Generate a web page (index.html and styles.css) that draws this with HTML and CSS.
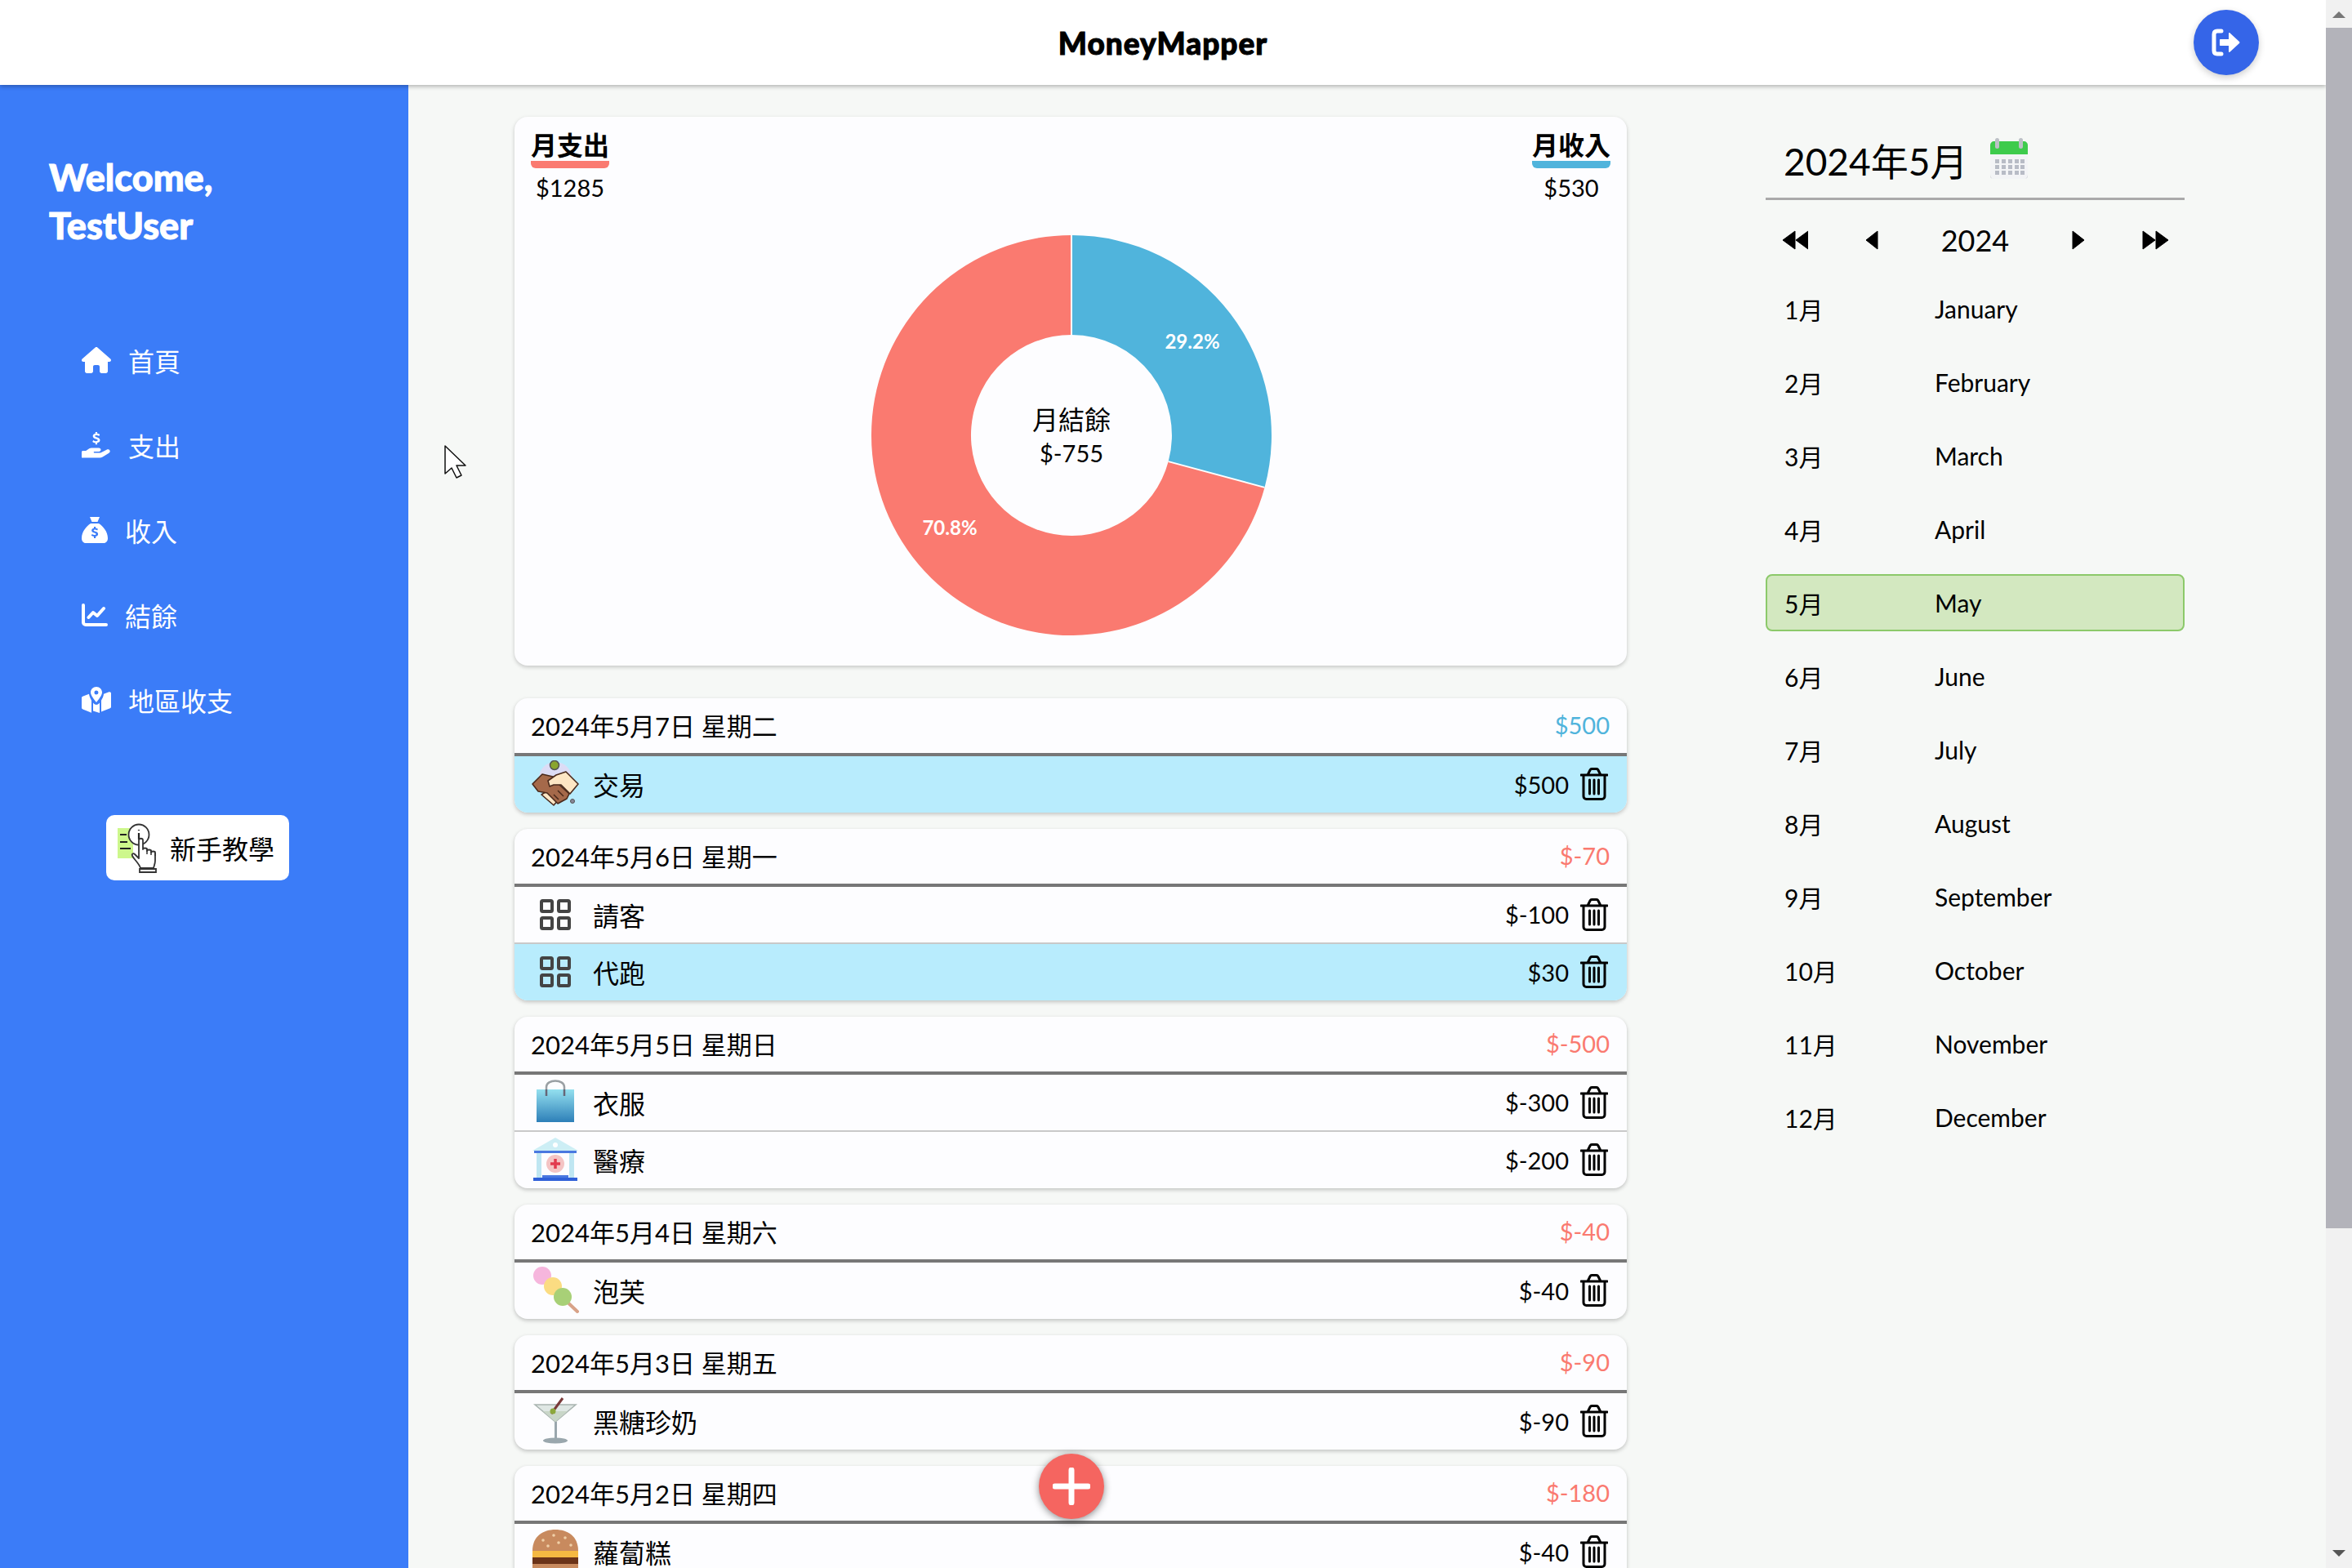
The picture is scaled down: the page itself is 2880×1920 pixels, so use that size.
FILE: index.html
```html
<!DOCTYPE html>
<html lang="zh-Hant">
<head>
<meta charset="utf-8">
<title>MoneyMapper</title>
<link rel="stylesheet" href="styles.css">
</head>
<body>
<svg class="defs" width="0" height="0" aria-hidden="true">
  <symbol id="trash" viewBox="0 0 34 40">
    <path d="M1 9h32M9 9l3-6c.5-1 1-1.500 2-1.500h6c1 0 1.500.5 2 1.500l3 6M4 9v26c0 2 1.500 3.500 3.500 3.500h19c2 0 3.500-1.500 3.500-3.500V9M11.500 15v17M17 15v17M22.500 15v17" fill="none" stroke="#000" stroke-width="3" stroke-linecap="round" stroke-linejoin="round"/>
  </symbol>
  <symbol id="grid" viewBox="0 0 38 38">
    <g fill="none" stroke="#444" stroke-width="4">
      <rect x="2" y="2" width="13" height="13" rx="1.500"/><rect x="23" y="2" width="13" height="13" rx="1.500"/>
      <rect x="2" y="23" width="13" height="13" rx="1.500"/><rect x="23" y="23" width="13" height="13" rx="1.500"/>
    </g>
  </symbol>
</svg>
<div class="screen">
  <div class="page">
    <header class="topbar">
      <h1 class="brand">MoneyMapper</h1>
      <button class="logout" aria-label="logout">
        <svg width="36" height="34" viewBox="0 0 36 34"><path d="M12 3H7C4.500 3 3 4.500 3 7v20c0 2.500 1.500 4 4 4h5" fill="none" stroke="#fff" stroke-width="5" stroke-linecap="round"/><path d="M11 13h10V6c0-.8 1-1.200 1.600-.6L34 16c.6.600.6 1.400 0 2L22.600 28.600c-.6.600-1.600.2-1.600-.6v-7H11c-.6 0-1-.4-1-1v-6c0-.6.400-1 1-1z" fill="#fff"/></svg>
      </button>
    </header>
    <div class="content">
      <aside class="sidebar">
        <h2 class="welcome">Welcome,<br>TestUser</h2>
        <nav class="nav">
          <a class="nav-link"><svg class="nav-icon" width="36" height="32" viewBox="0 0 576 512"><path fill="#fff" d="M575.800 255.500c0 18-15 32.100-32 32.100h-32l.7 160.200c0 2.700-.2 5.400-.5 8.100V472c0 22.100-17.900 40-40 40H456c-1.100 0-2.200 0-3.300-.1c-1.400.1-2.800.1-4.200.1H416 392c-22.100 0-40-17.900-40-40V448 384c0-17.700-14.300-32-32-32H256c-17.700 0-32 14.300-32 32v64 24c0 22.100-17.900 40-40 40H160 128.100c-1.500 0-3-.1-4.500-.2c-1.200.1-2.400.2-3.600.2H104c-22.100 0-40-17.900-40-40V360c0-.9 0-1.900.1-2.800V287.600H32c-18 0-32-14-32-32.100c0-9 3-17 10-24L266.400 8c7-7 15-8 22-8s15 2 21 7L564.800 231.500c8 7 12 15 11 24z"/></svg><span>首頁</span></a>
          <a class="nav-link"><svg class="nav-icon" width="36" height="32" viewBox="0 0 36 32"><path fill="#fff" d="M0 24.500c0-.8.700-1.500 1.500-1.500h3.700l3.300-2.300c1.500-1 3-1.200 4.500-1.200h8c1.500 0 2.500 1 2.500 2.200s-1 2.300-2.500 2.300h-5.500c-.5 0-.8.300-.8.700s.3.800.8.800h7.500l7.500-3.800c1.500-.8 3.200-.4 3.900.7.700 1 .2 2.500-1 3.300l-7.700 4.800c-1 .6-2.300 1-3.500 1H1.500C.7 32 0 31.300 0 30.500z"/><path fill="#fff" d="M17 0h2.500v2c1.500.2 2.800.8 3.500 1.300l-1 2.300c-1-.6-2.300-1.100-3.500-1.100-1.300 0-2 .4-2 1.100 0 .8 1 1.100 2.600 1.600 2.300.7 4.200 1.500 4.200 3.900 0 2-1.500 3.300-3.800 3.600V17H17v-2.200c-1.500-.2-3-.8-4-1.600l1.100-2.200c1.100.9 2.600 1.400 3.900 1.400 1.400 0 2.200-.5 2.200-1.200 0-.9-1-1.200-2.700-1.800-2.100-.7-4-1.500-4-3.800 0-1.900 1.300-3.200 3.500-3.500z" transform="translate(1.500 0) scale(.9)"/></svg><span>支出</span></a>
          <a class="nav-link"><svg class="nav-icon" width="32" height="32" viewBox="0 0 32 32"><path fill="#fff" d="M10 0h12l-2.500 6h-7zM11 8h10c5 3 11 10 11 18 0 3.500-2 6-5 6H5c-3 0-5-2.500-5-6C0 18 6 11 11 8z"/><path fill="#3b7cf8" d="M15 12h2.200v1.700c1.100.1 2 .5 2.700 1l-.8 1.800c-.8-.5-1.800-.9-2.800-.9-1 0-1.600.3-1.600.9 0 .7.800.9 2.100 1.300 1.800.6 3.300 1.200 3.300 3.100 0 1.600-1.100 2.600-2.900 2.900V26H15v-2c-1.200-.2-2.400-.7-3.200-1.300l.9-1.800c.9.700 2.100 1.100 3.100 1.100 1.100 0 1.700-.4 1.700-1 0-.7-.8-1-2.100-1.400-1.700-.6-3.200-1.200-3.200-3 0-1.500 1-2.500 2.800-2.800z"/></svg><span>收入</span></a>
          <a class="nav-link"><svg class="nav-icon" width="32" height="28" viewBox="0 0 32 28"><path d="M2 2v21c0 1.700 1.300 3 3 3h25M8.500 17l5.500-6 5 4 8-9" fill="none" stroke="#fff" stroke-width="4" stroke-linecap="round" stroke-linejoin="round"/></svg><span>結餘</span></a>
          <a class="nav-link"><svg class="nav-icon" width="36" height="32" viewBox="0 0 36 32"><path fill="#fff" fill-rule="evenodd" d="M18 0c4 0 7 3 7 6.800C25 10.500 20.500 16 18 19c-2.500-3-7-8.500-7-12.200C11 3 14 0 18 0zm0 4.500a2.500 2.500 0 1 0 0 5 2.500 2.500 0 0 0 0-5z"/><path fill="#fff" d="M0 13.500c0-.8.500-1.500 1.200-1.800L9 8.800c.2 2.500 2 6 3 8v15L1.400 27.500C.6 27.200 0 26.500 0 25.600zM14 19.500c1.500 1.800 3 2.500 4 2.500s2.500-.7 4-2.500V32l-8-2.500zM24 16.800c1-2 2.800-5 3-8l6.500-2.500C34.800 5.800 36 6.700 36 8v16.500c0 .8-.5 1.500-1.200 1.800L24 30.500z"/></svg><span>地區收支</span></a>
        </nav>
        <button class="tutorial">
          <svg class="tutorial-icon" width="54" height="62" viewBox="0 0 54 62">
            <rect x="0" y="7" width="19" height="37" fill="#cdf78c"/>
            <path d="M3 15h8M3 24h9M3 32h13" stroke="#222" stroke-width="2" fill="none"/>
            <circle cx="26" cy="15" r="12.500" fill="#fff" stroke="#333" stroke-width="1.800"/>
            <path d="M26 9v1M26 13v8" stroke="#222" stroke-width="2.200"/>
            <path d="M28 56c-1-5-8-11-10-15-1-2 1-4 3-2l5 5V22c0-3 5-3 5 0v11c0-2 5-2 5 0v2c0-2 5-2 5 0v2c0-2 5-2 5 0v10c0 3-1 5-2 9z" fill="#fff" stroke="#333" stroke-width="1.800" stroke-linejoin="round"/>
            <path d="M36 33v6M41 35v5M46 37v4" stroke="#333" stroke-width="1.500"/>
            <path d="M27 57h20v4H27z" fill="#fff" stroke="#333" stroke-width="1.800"/>
          </svg>
          <span>新手教學</span>
        </button>
      </aside>
      <main class="main">
        <section class="list-column">
          <div class="summary">
            <div class="summary-top">
              <div class="legend"><span class="legend-name legend-out">月支出</span><span class="legend-value">$1285</span></div>
              <div class="legend"><span class="legend-name legend-in">月收入</span><span class="legend-value">$530</span></div>
            </div>
            <div class="donut">
              <svg width="492" height="492" viewBox="-246 -246 492 492">
                <path fill="#fa7a70" d="M0-245A245 245 0 1 0 236.500 63.900L118.700 32.100A123 123 0 1 1 0-123z"/>
                <path fill="#50b4dc" d="M0-245A245 245 0 0 1 236.500 63.900L118.700 32.100A123 123 0 0 0 0-123z"/>
                <path d="M0-245V-123M236.500 63.900L118.700 32.100" stroke="#fff" stroke-width="2"/>
                <text class="donut-pct" x="148" y="-106">29.2%</text>
                <text class="donut-pct" x="-149" y="122">70.8%</text>
              </svg>
              <div class="donut-center"><span>月結餘</span><span class="donut-amount">$-755</span></div>
            </div>
          </div>

          <article class="day">
            <div class="day-head"><span class="day-date">2024年5月7日 星期二</span><span class="day-total pos">$500</span></div>
            <div class="tx tx-in">
              <svg class="tx-icon" width="58" height="58" viewBox="0 0 58 58">
                <path d="M9 22a20 20 0 0 1 40 0z" fill="#dcdcf5"/>
                <circle cx="28" cy="6" r="5.500" fill="#8aa52e" stroke="#555" stroke-width="1.500"/>
                <circle cx="50" cy="50" r="2.500" fill="#889" stroke="#555"/>
                <path d="M12 42l8-5 13 11-6 7z" fill="#fde6c4" stroke="#4a2a1c" stroke-width="1.600" stroke-linejoin="round"/>
                <path d="M1 29L13 17l13 3 8 10 12 11-3 6-11 6-13-13-11-2z" fill="#a5694a" stroke="#4a2a1c" stroke-width="1.600" stroke-linejoin="round"/>
                <path d="M20 25l10-7 12-4 15 15-10 12-11-11h-9l-5 2z" fill="#fde6c4" stroke="#4a2a1c" stroke-width="1.600" stroke-linejoin="round"/>
                <path d="M27 42l6 6M32 37l7 7" stroke="#4a2a1c" stroke-width="1.500"/>
              </svg>
              <span class="tx-name">交易</span><span class="tx-amount">$500</span>
              <svg class="trash" width="34" height="40"><use href="#trash"/></svg>
            </div>
          </article>

          <article class="day">
            <div class="day-head"><span class="day-date">2024年5月6日 星期一</span><span class="day-total neg">$-70</span></div>
            <div class="tx">
              <svg class="tx-icon tx-grid" width="38" height="38"><use href="#grid"/></svg>
              <span class="tx-name">請客</span><span class="tx-amount">$-100</span>
              <svg class="trash" width="34" height="40"><use href="#trash"/></svg>
            </div>
            <div class="tx tx-in">
              <svg class="tx-icon tx-grid" width="38" height="38"><use href="#grid"/></svg>
              <span class="tx-name">代跑</span><span class="tx-amount">$30</span>
              <svg class="trash" width="34" height="40"><use href="#trash"/></svg>
            </div>
          </article>

          <article class="day">
            <div class="day-head"><span class="day-date">2024年5月5日 星期日</span><span class="day-total neg">$-500</span></div>
            <div class="tx">
              <svg class="tx-icon" width="58" height="58" viewBox="0 0 58 58">
                <defs><linearGradient id="bag" x1="0" y1="0" x2="0" y2="1"><stop offset="0" stop-color="#94e0ef"/><stop offset="1" stop-color="#2d7fb8"/></linearGradient></defs>
                <path d="M18 24V10c0-10 22-10 22 0v14" fill="none" stroke="#9aa0a4" stroke-width="2.500"/>
                <rect x="6" y="13" width="46" height="40" fill="url(#bag)"/>
                <path d="M18 13v8M40 13v8" stroke="#667" stroke-width="2.500"/>
              </svg>
              <span class="tx-name">衣服</span><span class="tx-amount">$-300</span>
              <svg class="trash" width="34" height="40"><use href="#trash"/></svg>
            </div>
            <div class="tx">
              <svg class="tx-icon" width="58" height="58" viewBox="0 0 58 58">
                <path d="M1 18L29 2l28 16z" fill="#cdeef5"/>
                <circle cx="29" cy="11" r="3" fill="#fff"/>
                <rect x="3" y="18" width="52" height="3" fill="#4a78e0"/>
                <path d="M6 21h6v30H6zM46 21h6v30h-6z" fill="#bfe6f2"/>
                <rect x="12" y="21" width="34" height="28" fill="#fdfdff"/>
                <circle cx="29" cy="34" r="11" fill="#f4c4c4"/>
                <path d="M29 28v12M23 34h12" stroke="#e23a4e" stroke-width="3.500"/>
                <rect x="13" y="48" width="32" height="3" fill="#4a78e0"/>
                <rect x="2" y="51" width="54" height="4" fill="#3060d8"/>
              </svg>
              <span class="tx-name">醫療</span><span class="tx-amount">$-200</span>
              <svg class="trash" width="34" height="40"><use href="#trash"/></svg>
            </div>
          </article>

          <article class="day">
            <div class="day-head"><span class="day-date">2024年5月4日 星期六</span><span class="day-total neg">$-40</span></div>
            <div class="tx">
              <svg class="tx-icon" width="58" height="58" viewBox="0 0 58 58">
                <path d="M38 38l18 17" stroke="#d8a288" stroke-width="4" stroke-linecap="round"/>
                <circle cx="13" cy="11" r="11" fill="#f6b6dd"/>
                <circle cx="26" cy="24" r="11" fill="#fbdc82"/>
                <circle cx="38" cy="37" r="11" fill="#a8d077"/>
              </svg>
              <span class="tx-name">泡芙</span><span class="tx-amount">$-40</span>
              <svg class="trash" width="34" height="40"><use href="#trash"/></svg>
            </div>
          </article>

          <article class="day">
            <div class="day-head"><span class="day-date">2024年5月3日 星期五</span><span class="day-total neg">$-90</span></div>
            <div class="tx">
              <svg class="tx-icon" width="58" height="58" viewBox="0 0 58 58">
                <path d="M4 9h50L29 30z" fill="#dfe7e4" stroke="#a9b4b0" stroke-width="1.500"/>
                <path d="M14 17h30L29 30z" fill="#c9d6c8"/>
                <path d="M28 30h3v20h-3z" fill="#9aa7ad"/>
                <ellipse cx="29" cy="53" rx="15" ry="3.500" fill="#9aa7ad"/>
                <path d="M24 20L38 1" stroke="#7a3a3a" stroke-width="3"/>
                <circle cx="26" cy="17" r="3.500" fill="#8ca83c"/>
              </svg>
              <span class="tx-name">黑糖珍奶</span><span class="tx-amount">$-90</span>
              <svg class="trash" width="34" height="40"><use href="#trash"/></svg>
            </div>
          </article>

          <article class="day">
            <div class="day-head"><span class="day-date">2024年5月2日 星期四</span><span class="day-total neg">$-180</span></div>
            <div class="tx">
              <svg class="tx-icon" width="58" height="58" viewBox="0 0 58 58">
                <path d="M1 28C1 10 14 2 29 2s28 8 28 26z" fill="#c88a5e"/>
                <g fill="#f0d0a8"><circle cx="14" cy="15" r="1.800"/><circle cx="27" cy="9" r="1.800"/><circle cx="41" cy="12" r="1.800"/><circle cx="48" cy="21" r="1.800"/><circle cx="33" cy="18" r="1.800"/><circle cx="20" cy="22" r="1.800"/></g>
                <path d="M1 28h56v8l-14 2-14 6-14-6-14-2z" fill="#f5b942"/>
                <path d="M1 36h56v8H1z" fill="#6b3318"/>
                <path d="M1 44h56v6c0 4-3 6-6 6H7c-3 0-6-2-6-6z" fill="#c88a5e"/>
              </svg>
              <span class="tx-name">蘿蔔糕</span><span class="tx-amount">$-40</span>
              <svg class="trash" width="34" height="40"><use href="#trash"/></svg>
            </div>
          </article>
        </section>

        <aside class="calendar">
          <div class="cal-title">
            <span class="cal-heading">2024年5月</span>
            <svg class="cal-icon" width="46" height="52" viewBox="0 0 46 52">
              <path d="M0 16v30c0 3 2 5 5 5h36c3 0 5-2 5-5V16z" fill="#f3f4f6"/>
              <path d="M0 45c0 4 2 6 5 6h36c3 0 5-2 5-6v3c0 2-2 3-5 3H5c-3 0-5-1-5-3z" fill="#cdd0d6"/>
              <path d="M5 5h36c3 0 5 2 5 5v11H0V10c0-3 2-5 5-5z" fill="#3ecb4c"/>
              <g fill="#b8bcc6"><rect x="6" y="27" width="5" height="5"/><rect x="14" y="27" width="5" height="5"/><rect x="22" y="27" width="5" height="5"/><rect x="30" y="27" width="5" height="5"/><rect x="37" y="27" width="5" height="5"/><rect x="6" y="34" width="5" height="5"/><rect x="14" y="34" width="5" height="5"/><rect x="22" y="34" width="5" height="5"/><rect x="30" y="34" width="5" height="5"/><rect x="37" y="34" width="5" height="5"/><rect x="6" y="41" width="5" height="5"/><rect x="14" y="41" width="5" height="5"/><rect x="22" y="41" width="5" height="5"/><rect x="30" y="41" width="5" height="5"/><rect x="37" y="41" width="5" height="5"/></g>
              <rect x="6" y="1" width="5" height="13" rx="2.500" fill="#bcc0c6"/><rect x="35" y="1" width="5" height="13" rx="2.500" fill="#bcc0c6"/>
            </svg>
          </div>
          <div class="cal-nav">
            <svg width="32" height="24" viewBox="0 0 32 24"><path d="M16 1v22L1 12zM32 1v22L17 12z" fill="#000" stroke="#000" stroke-width="1" stroke-linejoin="round"/></svg>
            <svg width="16" height="24" viewBox="0 0 16 24"><path d="M15 1v22L1 12z" fill="#000" stroke="#000" stroke-width="1" stroke-linejoin="round"/></svg>
            <span class="cal-year">2024</span>
            <svg width="16" height="24" viewBox="0 0 16 24"><path d="M1 1v22l14-11z" fill="#000" stroke="#000" stroke-width="1" stroke-linejoin="round"/></svg>
            <svg width="32" height="24" viewBox="0 0 32 24"><path d="M1 1v22l15-11zM17 1v22l15-11z" fill="#000" stroke="#000" stroke-width="1" stroke-linejoin="round"/></svg>
          </div>
          <ul class="months">
            <li class="month"><span class="month-zh">1月</span><span>January</span></li>
            <li class="month"><span class="month-zh">2月</span><span>February</span></li>
            <li class="month"><span class="month-zh">3月</span><span>March</span></li>
            <li class="month"><span class="month-zh">4月</span><span>April</span></li>
            <li class="month month-active"><span class="month-zh">5月</span><span>May</span></li>
            <li class="month"><span class="month-zh">6月</span><span>June</span></li>
            <li class="month"><span class="month-zh">7月</span><span>July</span></li>
            <li class="month"><span class="month-zh">8月</span><span>August</span></li>
            <li class="month"><span class="month-zh">9月</span><span>September</span></li>
            <li class="month"><span class="month-zh">10月</span><span>October</span></li>
            <li class="month"><span class="month-zh">11月</span><span>November</span></li>
            <li class="month"><span class="month-zh">12月</span><span>December</span></li>
          </ul>
        </aside>
      </main>
    </div>
    <button class="fab" aria-label="add">
      <svg width="46" height="46" viewBox="0 0 46 46"><path d="M23 3v40M3 23h40" stroke="#fff" stroke-width="7" stroke-linecap="round"/></svg>
    </button>
    <svg class="cursor" width="30" height="42" viewBox="0 0 30 42"><path d="M2 1v34l8-7 6 12 6-3-6-12h11z" fill="#fff" stroke="#111" stroke-width="1.500" stroke-linejoin="round"/></svg>
  </div>
  <div class="scrollbar">
    <span class="scroll-arrow scroll-up"></span>
    <div class="scroll-track"><div class="scroll-thumb"></div></div>
    <span class="scroll-arrow scroll-down"></span>
  </div>
</div>
</body>
</html>
```
FILE: styles.css
```css
* { box-sizing: border-box; }
html, body { margin: 0; padding: 0; width: 2880px; height: 1920px; overflow: hidden; }
body { font-family: "Lato", "Noto Sans CJK TC", sans-serif; color: #000; background: #f6f8f6; }
.defs { position: absolute; }
.screen { display: flex; width: 2880px; height: 1920px; }
.page { position: relative; width: 2848px; height: 1920px; display: flex; flex-direction: column; overflow: hidden; }

.topbar { position: relative; z-index: 2; height: 104px; flex: none; background: #fff; box-shadow: 0 2px 5px rgba(0,0,0,.28); display: flex; align-items: center; justify-content: center; }
.brand { margin: 0; font-family: "Lato", sans-serif; font-size: 37px; font-weight: 900; letter-spacing: 1px; -webkit-text-stroke: 1px #000; }
.logout { position: absolute; right: 82px; top: 12px; width: 80px; height: 80px; border-radius: 50%; border: 0; padding: 0; background: #3565e8; box-shadow: 0 3px 8px rgba(0,0,0,.2); display: flex; align-items: center; justify-content: center; }

.content { flex: 1; display: flex; min-height: 0; }
.sidebar { width: 500px; flex: none; background: #3b7cf8; color: #fff; padding: 84px 0 0 60px; display: flex; flex-direction: column; }
.welcome { margin: 0; font-family: "Lato", sans-serif; font-size: 45px; line-height: 59px; font-weight: 900; -webkit-text-stroke: 1px #fff; }
.nav { display: flex; flex-direction: column; margin: 83px 0 0 40px; }
.nav-link { height: 104px; display: flex; align-items: center; gap: 21px; font-size: 32px; font-family: "Noto Sans CJK TC", sans-serif; }
.nav-icon { flex: none; }
.tutorial { margin: 89px 0 0 70px; width: 224px; height: 80px; border: 0; border-radius: 10px; background: #fff; display: flex; align-items: center; gap: 10px; padding: 0 0 0 14px; font: 32px "Noto Sans CJK TC", sans-serif; color: #000; }

.main { flex: 1; display: flex; align-items: flex-start; min-width: 0; padding: 39px 0 0 130px; }
.list-column { width: 1362px; flex: none; display: flex; flex-direction: column; gap: 20px; }
.summary { height: 672px; flex: none; margin-bottom: 20px; background: #fdfdff; border-radius: 16px; box-shadow: 0 2px 5px rgba(0,0,0,.2); position: relative; padding: 12px 20px; }
.summary-top { display: flex; justify-content: space-between; }
.legend { display: flex; flex-direction: column; align-items: center; }
.legend-name { font-family: "Noto Sans CJK TC", sans-serif; font-weight: 700; font-size: 32px; line-height: 42px; border-bottom: 9px solid; border-radius: 0 0 6px 6px; }
.legend-out { border-color: #fa7a70; }
.legend-in { border-color: #50b4dc; }
.legend-value { font-size: 29px; line-height: 42px; margin-top: 3px; }
.donut { position: absolute; left: 436px; top: 144px; width: 492px; height: 492px; }
.donut svg { display: block; }
.donut-pct { fill: #fff; font: 700 24px "Lato", sans-serif; text-anchor: middle; }
.donut-center { position: absolute; inset: 0; padding-top: 2px; display: flex; flex-direction: column; align-items: center; justify-content: center; font-size: 32px; line-height: 41px; }
.donut-amount { font-size: 29px; }

.day { flex: none; background: #fdfdff; border-radius: 16px; box-shadow: 0 2px 5px rgba(0,0,0,.22); overflow: hidden; }
.day-head { height: 71px; display: flex; align-items: center; justify-content: space-between; padding: 0 21px 2px 20px; border-bottom: 4px solid #777; }
.day-date { font-size: 31px; font-family: "Lato", "Noto Sans CJK TC", sans-serif; white-space: pre; }
.day-total { font-size: 29px; }
.pos { color: #50b4dc; }
.neg { color: #fa7a70; }
.tx { height: 70px; display: flex; align-items: center; padding: 0 23px 1px 21px; border-bottom: 2px solid #c9c9c9; }
.tx:last-child { border-bottom: 0; height: 69px; }
.tx-in { background: #b8ecfd; }
.tx-icon { flex: none; width: 58px; margin-right: 17px; }
.tx-grid { width: 38px; margin: 0 27px 0 10px; }
.tx-name { flex: 1; font-size: 32px; font-family: "Noto Sans CJK TC", sans-serif; }
.tx-amount { font-size: 29px; margin-right: 14px; }
.trash { flex: none; }

.calendar { width: 513px; flex: none; margin-left: 170px; }
.cal-title { height: 64px; display: flex; align-items: center; gap: 28px; padding: 0 0 0 22px; margin-top: 23px; }
.cal-heading { font-size: 46px; line-height: 64px; }
.cal-icon { margin-top: -8px; }
.cal-nav { margin-top: 12px; border-top: 3px solid #aaa; height: 100px; padding: 0 20px; display: flex; align-items: center; justify-content: space-between; }
.cal-year { font-size: 36px; width: 98px; text-align: center; white-space: nowrap; }
.months { list-style: none; margin: 1px 0 0; padding: 0; display: flex; flex-direction: column; gap: 20px; }
.month { height: 70px; display: flex; align-items: center; padding: 0 21px; font-size: 30px; border: 2px solid transparent; border-radius: 8px; }
.month-zh { width: 184px; }
.month-active { background: #d3e8c0; border-color: #8cc96a; }

.fab { position: absolute; left: 1272px; top: 1780px; width: 80px; height: 80px; border-radius: 50%; border: 0; padding: 0; background: #f56560; box-shadow: 0 2px 10px rgba(0,0,0,.45); display: flex; align-items: center; justify-content: center; }
.cursor { position: absolute; left: 543px; top: 545px; }

.scrollbar { width: 32px; flex: none; height: 1920px; background: #f1f1f1; display: flex; flex-direction: column; align-items: center; }
.scroll-arrow { width: 0; height: 0; flex: none; border-left: 8px solid transparent; border-right: 8px solid transparent; }
.scroll-up { border-bottom: 8px solid #777; margin: 14px 0 12px; }
.scroll-down { border-top: 8px solid #555; margin: 12px 0 14px; }
.scroll-track { flex: 1; width: 100%; }
.scroll-thumb { height: 1470px; background: #b3b3ba; width: 100%; }
```
